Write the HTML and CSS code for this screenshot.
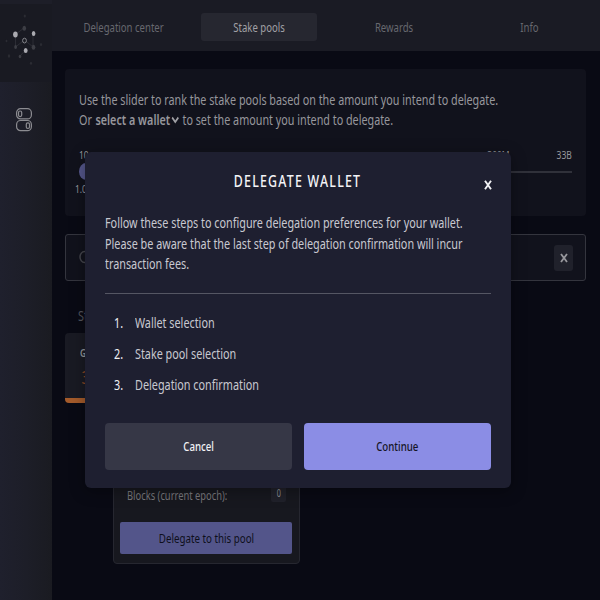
FILE: index.html
```html
<!DOCTYPE html>
<html lang="en">
<head>
<meta charset="utf-8">
<title>Delegate wallet</title>
<link rel="stylesheet" href="styles.css">
</head>
<body>
<div class="app">
  <aside class="sidebar">
    <div class="brand">
      <svg width="52" height="81" viewBox="0 0 52 81">
        <g stroke="#35363d" stroke-width=".7" fill="none"><path d="M16 34 24 28M15.500 36V47L24.500 40 33 47V35M25.500 50 20 56"/></g>
        <g fill="#aaaab0"><ellipse cx="15.400" cy="34.600" rx="2.300" ry="3"/><ellipse cx="33.600" cy="33.600" rx="1.800" ry="2.500"/><ellipse cx="25.700" cy="50.500" rx="1.900" ry="2.600"/></g>
        <g fill="#3d3e45"><ellipse cx="24.300" cy="28.300" rx="1.800" ry="2.500"/><ellipse cx="33.500" cy="47.300" rx="1.800" ry="2.500"/><ellipse cx="15.600" cy="47" rx="1.400" ry="2"/><ellipse cx="20" cy="56.500" rx="1.300" ry="1.800"/></g>
        <g fill="#2b2c33"><ellipse cx="24.800" cy="16" rx="1.100" ry="1.500"/><ellipse cx="31" cy="63.300" rx="1.100" ry="1.500"/><ellipse cx="9" cy="56" rx="1.200" ry="1.700"/><ellipse cx="41" cy="44.500" rx="1.100" ry="1.500"/><ellipse cx="6.500" cy="41" rx=".9" ry="1.200"/></g>
        <ellipse cx="24.500" cy="40.600" rx="1.900" ry="2.400" fill="#1a1b22" stroke="#85868c"/>
      </svg>
    </div>
    <svg class="toggles" width="18" height="26" viewBox="0 0 18 26" fill="none" stroke="#8c8c91" stroke-width="1.200">
      <rect x="1.600" y="1.700" width="14.800" height="10.200" rx="4"/><rect x="3.500" y="4" width="3.200" height="5.600" rx="1.500"/>
      <rect x="1.600" y="13.500" width="14.800" height="10.200" rx="4"/><rect x="11.300" y="15.800" width="3.200" height="5.600" rx="1.500"/>
    </svg>
  </aside>
  <main class="main">
    <nav class="tabs">
      <a class="tab"><span class="t">Delegation center</span></a>
      <a class="tab active"><span class="t">Stake pools</span></a>
      <a class="tab"><span class="t">Rewards</span></a>
      <a class="tab"><span class="t">Info</span></a>
    </nav>
    <section class="ranking">
      <p class="left">Use the slider to rank the stake pools based on the amount you intend to delegate.</p>
      <p class="left">Or <b>select a wallet</b><svg class="chevron" width="12" height="8" viewBox="0 0 12 8"><path d="M2 1.500 6 6 10 1.500" fill="none" stroke="#a0a0a5" stroke-width="2"/></svg>to set the amount you intend to delegate.</p>
      <div class="scale"><span class="t left">10</span><span class="t mid">300M</span><span class="t right">33B</span></div>
      <div class="slider"><i class="knob"></i></div>
      <div class="value"><span class="t left">1.00K</span></div>
    </section>
    <section class="search">
      <svg width="14" height="16" viewBox="0 0 14 16" fill="none" stroke="#44454c" stroke-width="1.500"><ellipse cx="5.500" cy="7" rx="4.500" ry="5.500"/><path d="m9 11 3 4"/></svg>
      <button class="clear"><svg width="8" height="10" viewBox="0 0 8 10"><path d="m1 1 6 8M7 1 1 9" stroke="#98989d" stroke-width="1.800"/></svg></button>
    </section>
    <h2 class="listing"><span class="t left">Stak</span></h2>
    <div class="pool"><span class="t left ticker">GRA</span><span class="t left rank">3</span></div>
    <div class="details">
      <div class="blocks"><span class="t left">Blocks (current epoch):</span><span class="count"><span class="t">0</span></span></div>
      <button class="delegate"><span class="t">Delegate to this pool</span></button>
    </div>
  </main>
</div>
<div class="dialog" role="dialog">
  <header><h1><span class="t">DELEGATE WALLET</span></h1>
    <svg class="close" width="8" height="10" viewBox="0 0 8 10"><path d="m1 .8 6 8.400M7 .8 1 9.200" stroke="#f2f2f5" stroke-width="1.900"/></svg>
  </header>
  <div class="intro">
    <p class="left">Follow these steps to configure delegation preferences for your wallet.</p>
    <p class="left">Please be aware that the last step of delegation confirmation will incur</p>
    <p class="left">transaction fees.</p>
  </div>
  <hr>
  <ol>
    <li><span class="t left n">1.</span><span class="t left">Wallet selection</span></li>
    <li><span class="t left n">2.</span><span class="t left">Stake pool selection</span></li>
    <li><span class="t left n">3.</span><span class="t left">Delegation confirmation</span></li>
  </ol>
  <div class="actions">
    <button class="cancel"><span class="t">Cancel</span></button>
    <button class="continue"><span class="t">Continue</span></button>
  </div>
</div>
</body>
</html>
```
FILE: styles.css
```css
* { box-sizing: border-box; }
body, h1, h2, p, ol, hr { margin: 0; padding: 0; }
body { width: 600px; height: 600px; overflow: hidden; background: #090a14; font: 14px/20px "Noto Sans", sans-serif; color: #97979c; }
button { border: 0; padding: 0; font: inherit; display: flex; align-items: center; justify-content: center; }
svg { display: block; }
.t, .left { display: block; white-space: nowrap; transform: scaleX(var(--squeeze, .773)); }
.left { transform-origin: 0 50%; }
.right { transform-origin: 100% 50%; }
.app { display: flex; width: 600px; height: 600px; }
.sidebar { width: 52px; height: 600px; flex: none; background: linear-gradient(90deg, #1f202d, #1d1e28 50%, #1a1b21); }
.brand { height: 82px; background: #191a22; border-top: 4px solid #1d1e28; }
.brand svg { margin-top: -4px; }
.toggles { margin: 25px 0 0 15px; }
.main { flex: 1; min-width: 0; }
.tabs { --squeeze: .735; height: 51px; background: #1a1b24; display: flex; gap: 20px; padding: 13px 13px 10px 14px; }
.tab { flex: 1; display: flex; align-items: center; justify-content: center; min-width: 0; font-size: 13px; color: #67686f; border-radius: 3px; }
.active { background: #262730; color: #a1a1a6; }
.ranking { --squeeze: .77; margin: 18px 14px 0 13px; height: 147px; padding: 21px 14px 0; background: #11121c; border-radius: 4px; }
.ranking p { width: max-content; }
.ranking b { font-weight: 600; margin-left: 1px; }
.chevron { display: inline-block; margin: 0 3px 1px 1px; }
.scale { display: flex; justify-content: space-between; font-size: 11px; height: 19px; margin-top: 15px; }
.scale .mid { margin-left: 353px; }
.slider { height: 2px; margin-top: 7px; background: #30313a; }
.knob { display: block; width: 14px; height: 17px; border-radius: 50%; background: #55578c; transform: translateY(-8px); }
.value { font-size: 11px; margin: 6px 0 0 -4px; }
.search { margin: 18px 14px 0 13px; height: 47px; border: 1px solid #34353e; border-radius: 3px; background: #11121c; display: flex; align-items: center; justify-content: space-between; padding: 0 12px 0 13px; }
.clear { width: 19px; height: 26px; border-radius: 3px; background: #20212b; }
.listing { font-size: 14px; font-weight: 400; color: #55565e; margin: 25px 0 0 26px; }
.pool { width: 80px; height: 70px; margin: 7px 0 0 13px; padding: 10px 15px; border-radius: 4px; background: #191a23; border-bottom: 5px solid #a45b2b; }
.ticker { font-size: 11px; font-weight: 600; }
.rank { font-size: 18px; color: #8f4824; line-height: 28px; padding-left: 2px; }
.details { --squeeze: .72; width: 187px; height: 90px; margin: 71px 0 0 61px; border: 1px solid #262730; border-radius: 4px; background: #17181f; padding: 10px 6px 0; }
.blocks { display: flex; justify-content: space-between; color: #77777c; font-size: 13px; padding: 0 7px; height: 37px; }
.count { width: 15px; height: 17px; background: #20212a; border-radius: 2px; display: flex; justify-content: center; font-size: 10px; line-height: 16px; color: #929297; }
.delegate { --squeeze: .75; width: 172px; height: 32px; background: #53558a; color: #0e0f1b; font-size: 13px; border-radius: 2px; }
.dialog { position: absolute; left: 85px; top: 152px; width: 426px; height: 336px; background: #1e1f30; border-radius: 6px; padding: 0 20px; color: #c9c9d0; box-shadow: 0 3px 15px rgba(0,0,0,.35); }
.dialog header { height: 61px; display: flex; align-items: center; justify-content: center; position: relative; }
h1 { font-size: 16px; font-weight: 500; letter-spacing: 1.600px; color: #f4f4f7; margin-top: -3px; }
.close { position: absolute; right: -1px; top: 28px; }
.intro p { line-height: 20.500px; width: max-content; }
hr { border: 0; height: 1px; background: #555663; margin-top: 18px; }
ol { list-style: none; padding-top: 14px; }
li { display: flex; height: 31px; align-items: center; padding-left: 9px; }
.n { width: 21px; color: #f0f0f4; }
.actions { --squeeze: .745; display: grid; grid-template-columns: 187px 187px; gap: 12px; margin-top: 22px; }
.actions button { height: 47px; border-radius: 4px; font-size: 13px; font-weight: 500; }
.actions .t { margin-top: -1px; }
.cancel { background: #363746; color: #f1f1f4; }
.continue { background: #8b8de5; color: #151526; }
```
